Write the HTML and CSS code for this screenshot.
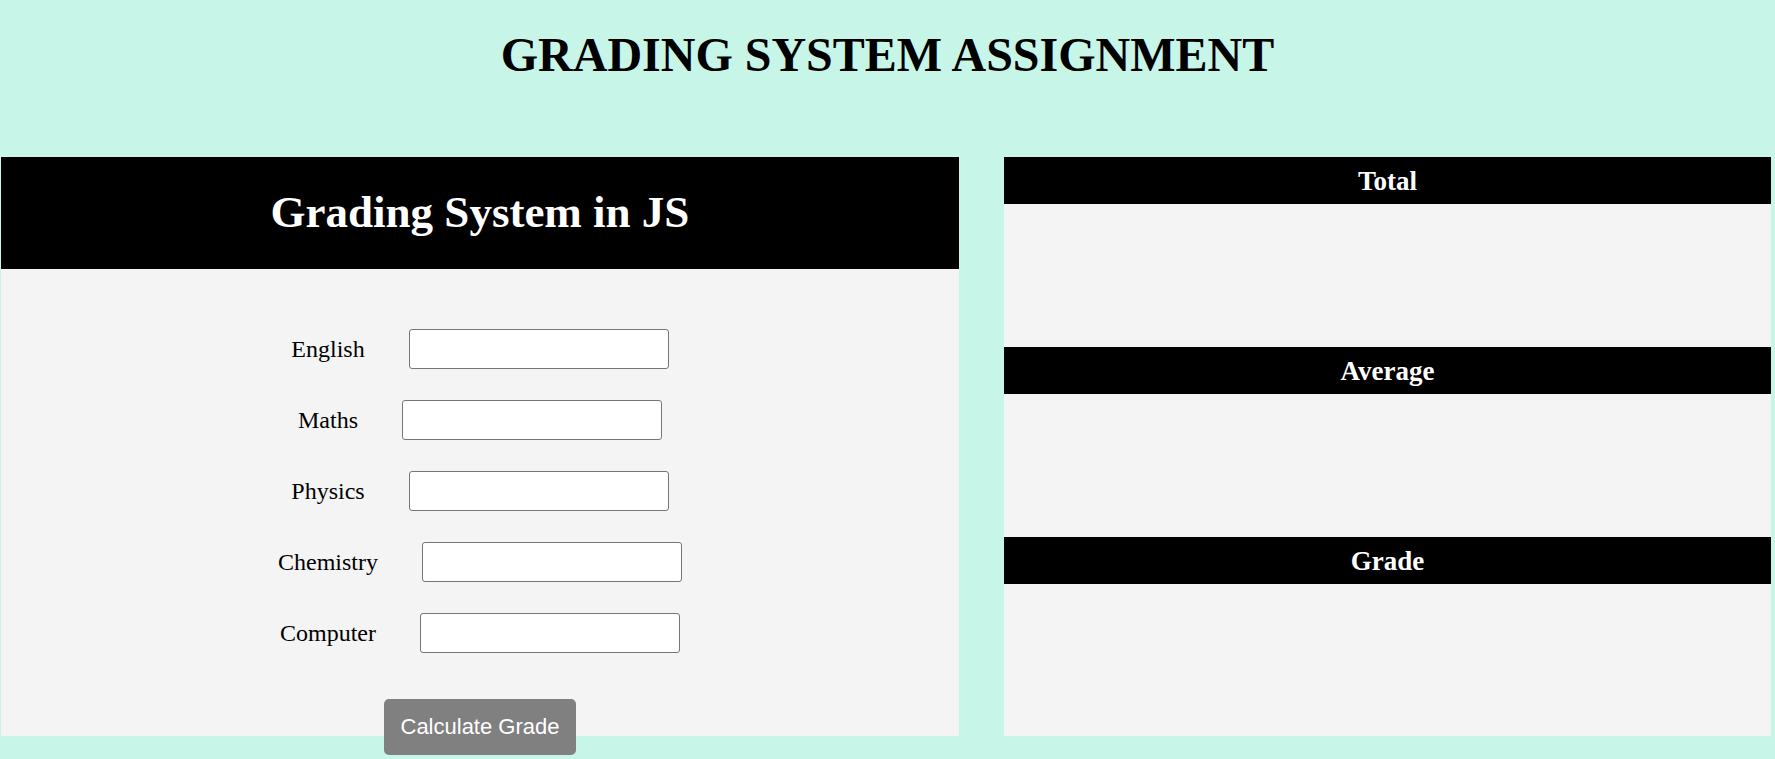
FILE: index.html
```html
<!DOCTYPE html>
<html lang="en">
<head>
<meta charset="utf-8">
<title>Grading System</title>
<link rel="stylesheet" href="styles.css">
</head>
<body>
<h1 class="page-title">GRADING SYSTEM ASSIGNMENT</h1>
<main class="layout">
  <section class="panel form-panel">
    <h2 class="panel-title">Grading System in JS</h2>
    <form class="grade-form">
      <div class="row"><label class="row-label" for="eng">English</label><input class="row-input" id="eng" type="text"></div>
      <div class="row"><label class="row-label" for="math">Maths</label><input class="row-input" id="math" type="text"></div>
      <div class="row"><label class="row-label" for="phy">Physics</label><input class="row-input" id="phy" type="text"></div>
      <div class="row"><label class="row-label" for="chem">Chemistry</label><input class="row-input" id="chem" type="text"></div>
      <div class="row"><label class="row-label" for="comp">Computer</label><input class="row-input" id="comp" type="text"></div>
      <div class="actions"><button class="calc-btn" type="button">Calculate Grade</button></div>
    </form>
  </section>
  <section class="results">
    <div class="result">
      <h3 class="result-title">Total</h3>
      <div class="result-body"></div>
    </div>
    <div class="result">
      <h3 class="result-title">Average</h3>
      <div class="result-body"></div>
    </div>
    <div class="result result-last">
      <h3 class="result-title">Grade</h3>
      <div class="result-body"></div>
    </div>
  </section>
</main>
</body>
</html>
```
FILE: styles.css
```css
html, body {
  margin: 0;
  padding: 0;
}
body {
  background: #c7f6e9;
  font-family: "Liberation Serif", "Times New Roman", serif;
  color: #000;
  height: 759px;
  overflow: hidden;
}
.page-title {
  margin: 0;
  box-sizing: border-box;
  height: 157px;
  padding-top: 27px;
  font-size: 48px;
  line-height: 55px;
  font-weight: bold;
  text-align: center;
}
.layout {
  display: flex;
  gap: 45px;
  padding-left: 1px;
  height: 579px;
}
.panel {
  width: 958px;
  background: #f4f4f4;
  display: flex;
  flex-direction: column;
}
.panel-title {
  margin: 0;
  flex-shrink: 0;
  height: 112px;
  line-height: 110px;
  background: #000;
  color: #fff;
  font-size: 45px;
  font-weight: bold;
  text-align: center;
}
.grade-form {
  flex-shrink: 0;
  display: flex;
  flex-direction: column;
  gap: 31px;
  padding-top: 60px;
}
.row {
  display: flex;
  justify-content: center;
  align-items: center;
  gap: 44px;
  height: 40px;
}
.row-label {
  font-size: 24px;
}
.row-input {
  box-sizing: border-box;
  width: 260px;
  height: 40px;
  margin: 0;
  border: 1px solid #767676;
  border-radius: 3px;
  background: #fff;
}
.actions {
  display: flex;
  justify-content: center;
  margin-top: 15px;
}
.calc-btn {
  background: #808080;
  color: #fff;
  border: none;
  border-radius: 5px;
  font-family: "Liberation Sans", Arial, sans-serif;
  font-size: 22px;
  line-height: 26px;
  padding: 15px 15px;
  width: 192px;
}
.results {
  width: 767px;
  display: flex;
  flex-direction: column;
}
.result {
  display: flex;
  flex-direction: column;
  height: 190px;
  flex-shrink: 0;
}
.result-last {
  height: auto;
  flex: 1;
}
.result-title {
  margin: 0;
  flex-shrink: 0;
  height: 47px;
  line-height: 48px;
  background: #000;
  color: #fff;
  font-size: 27px;
  font-weight: bold;
  text-align: center;
}
.result-body {
  flex: 1;
  background: #f4f4f4;
}
```
